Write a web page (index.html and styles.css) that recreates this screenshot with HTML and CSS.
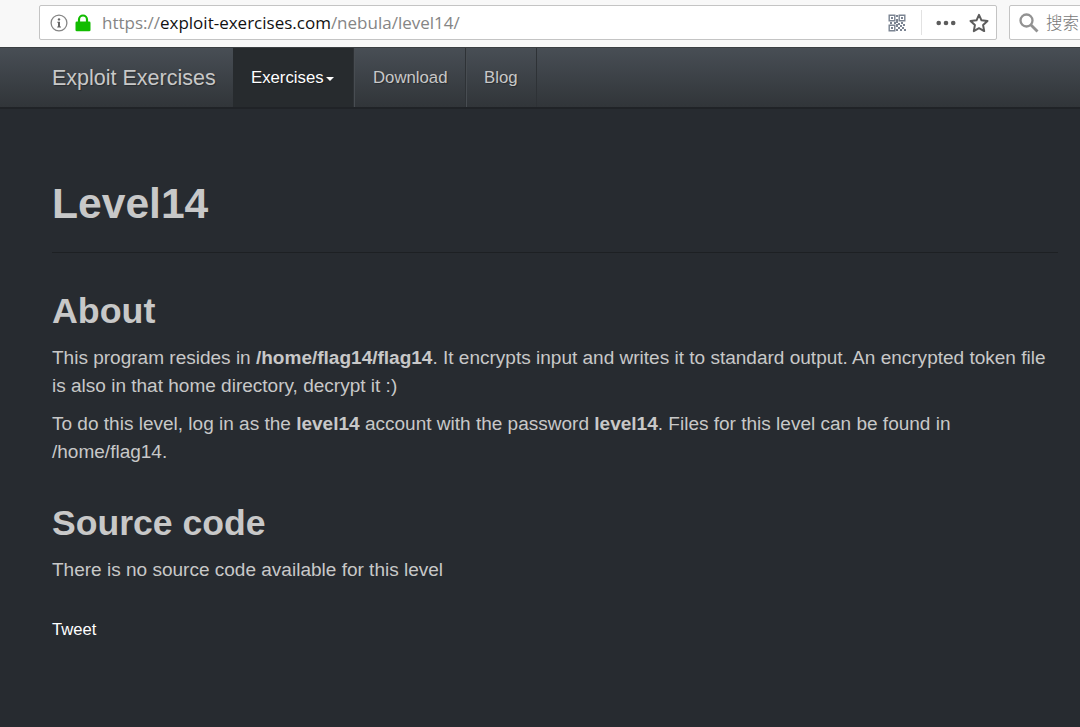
FILE: index.html
```
<!DOCTYPE html>
<html lang="en">
<head>
<meta charset="utf-8">
<title>Level14 - Exploit Exercises</title>
<link rel="stylesheet" href="styles.css">
</head>
<body>
<header class="toolbar">
  <div class="address">
    <svg class="info" width="18" height="18" viewBox="0 0 18 18"><circle cx="9" cy="9" r="7.9" fill="none" stroke="#858585" stroke-width="1.3"/><circle cx="9" cy="5.4" r="1.2" fill="#666"/><path d="M7.3 7.8H10v4.6h1v1H7.2v-1H8V8.8h-.7z" fill="#666"/></svg>
    <svg class="lock" width="16" height="18" viewBox="0 0 16 18"><path d="M4 9V5.5a4 4 0 0 1 8 0V9" fill="none" stroke="#12bc00" stroke-width="2.2"/><rect x="0.5" y="7.6" width="15" height="9.6" rx="1.3" fill="#12bc00"/></svg>
    <span class="url">https://<span class="domain">exploit-exercises.com</span>/nebula/level14/</span>
    <svg class="qr" width="18" height="18" viewBox="0 0 18 18" fill="none" stroke="#7b8492" stroke-width="1.4"><path d="M1.2 1.2h5.6v5.6H1.2zM11.2 1.2h5.6v5.6h-5.6zM1.2 11.2h5.6v5.6H1.2z"/><path stroke="none" fill="#7b8492" d="M3 3h2v2H3zM13 3h2v2h-2zM3 13h2v2H3zM8 1h2v2H8zM8 5h2v2H8zM2 8h2v2H2zM6 8h2v2H6zM8 7h2v2H8zM10 9h2v2h-2zM8 10h2v3H8zM13 8h2v2h-2zM15 10h2v2h-2zM12 11h2v2h-2zM10 13h2v2h-2zM14 13h2v2h-2zM8 15h2v2H8zM12 15h2v2h-2zM16 15h2v2h-2z"/></svg>
    <span class="divider"></span>
    <svg class="dots" width="20" height="6" viewBox="0 0 20 6" fill="#5c5c5c"><circle cx="2.7" cy="3" r="2.3"/><circle cx="10" cy="3" r="2.3"/><circle cx="17.2" cy="3" r="2.3"/></svg>
    <svg class="star" width="20" height="20" viewBox="0 0 20 20"><path d="M10 1.8l2.5 5.5 6 .7-4.4 4.1 1.1 6L10 15.2l-5.2 2.9 1.1-6L1.5 8l6-.7z" fill="none" stroke="#5c5c5c" stroke-width="2" stroke-linejoin="round"/></svg>
  </div>
  <div class="search">
    <svg width="20" height="20" viewBox="0 0 20 20" fill="none" stroke="#929292" stroke-width="2.3"><circle cx="7.5" cy="7.5" r="6"/><path d="M12 12l6.5 6.5" stroke-width="2.8"/></svg>
    <span>搜索</span>
  </div>
</header>
<nav class="navbar">
  <a class="brand">Exploit Exercises</a>
  <a class="item active">Exercises<span class="caret"></span></a>
  <a class="item download">Download</a>
  <a class="item blog">Blog</a>
</nav>
<main class="content">
  <h1>Level14</h1>
  <hr>
  <h2>About</h2>
  <p>This program resides in <strong>/home/flag14/flag14</strong>. It encrypts input and writes it to standard output. An encrypted token file is also in that home directory, decrypt it :)</p>
  <p>To do this level, log in as the <strong>level14</strong> account with the password <strong>level14</strong>. Files for this level can be found in /home/flag14.</p>
  <h2 class="source">Source code</h2>
  <p>There is no source code available for this level</p>
  <a class="tweet">Tweet</a>
</main>
</body>
</html>
```
FILE: styles.css
```
* { box-sizing: border-box; }
body {
  margin: 0;
  height: 727px;
  overflow: hidden;
  background: #272b30;
  color: #c8c8c8;
  font-family: "Liberation Sans", Arial, sans-serif;
}
.toolbar {
  display: flex;
  gap: 12px;
  height: 47px;
  padding: 5px 0 0 39px;
  background: #f8f8f8;
  overflow: hidden;
}
.address, .search {
  display: flex;
  align-items: center;
  flex: none;
  height: 35px;
  background: #fff;
  border: 1px solid #c4c4c4;
  border-radius: 2px;
}
.address { width: 958px; padding-left: 10px; }
.lock { margin-left: 7px; }
.url {
  width: 786px;
  margin-left: 11px;
  color: #858585;
  font: 17px/24px "Open Sans", "Noto Sans", sans-serif;
  white-space: nowrap;
}
.domain { color: #111; }
.divider { width: 1px; height: 25px; margin: 0 14px 0 15px; background: #e2e2e2; }
.star { margin-left: 13px; }
.address svg { flex: none; }
.search { width: 90px; padding-left: 9px; gap: 7px; }
.search svg { flex: none; }
.search span {
  color: #777;
  font: 300 16.5px/24px "Noto Sans CJK SC", sans-serif;
  white-space: nowrap;
  margin-top: -2px;
}
.navbar {
  display: flex;
  height: 62px;
  padding-left: 52px;
  border-top: 1px solid #3b3f42;
  border-bottom: 2px solid #202327;
  background: linear-gradient(#484e55, #3a3f44 60%, #313539);
  text-shadow: 1px 1px 1px rgba(0, 0, 0, .3);
}
.brand { width: 181px; font-size: 21.5px; line-height: 61px; white-space: nowrap; }
.item {
  padding-left: 18px;
  font-size: 16.75px;
  line-height: 60px;
  border-right: 1px solid #2e3236;
}
.active { width: 121px; background: #272b2e; color: #fff; }
.download { width: 112px; border-left: 1px solid #484d52; }
.blog { width: 71px; padding-left: 17px; border-left: 1px solid #484d52; }
.caret {
  display: inline-block;
  margin-left: 2px;
  vertical-align: 2.5px;
  border: 4.8px solid transparent;
  border-top-color: #fff;
  border-bottom: 0;
}
.content { padding: 69px 22px 0 52px; }
h1 { margin: 0; font-size: 42.6px; line-height: 50px; }
hr { margin: 24px 0 38px; border: 0; height: 1px; background: #1d2023; }
h2 { margin: 0 0 13.4px; font-size: 35.8px; line-height: 40px; }
p { margin: 0 0 11.5px; font-size: 19.02px; line-height: 27.3px; }
.source { margin-top: 37.6px; font-size: 35.6px; }
.tweet { display: block; margin-top: 34.5px; color: #fff; font-size: 16.6px; line-height: 24px; }
```
